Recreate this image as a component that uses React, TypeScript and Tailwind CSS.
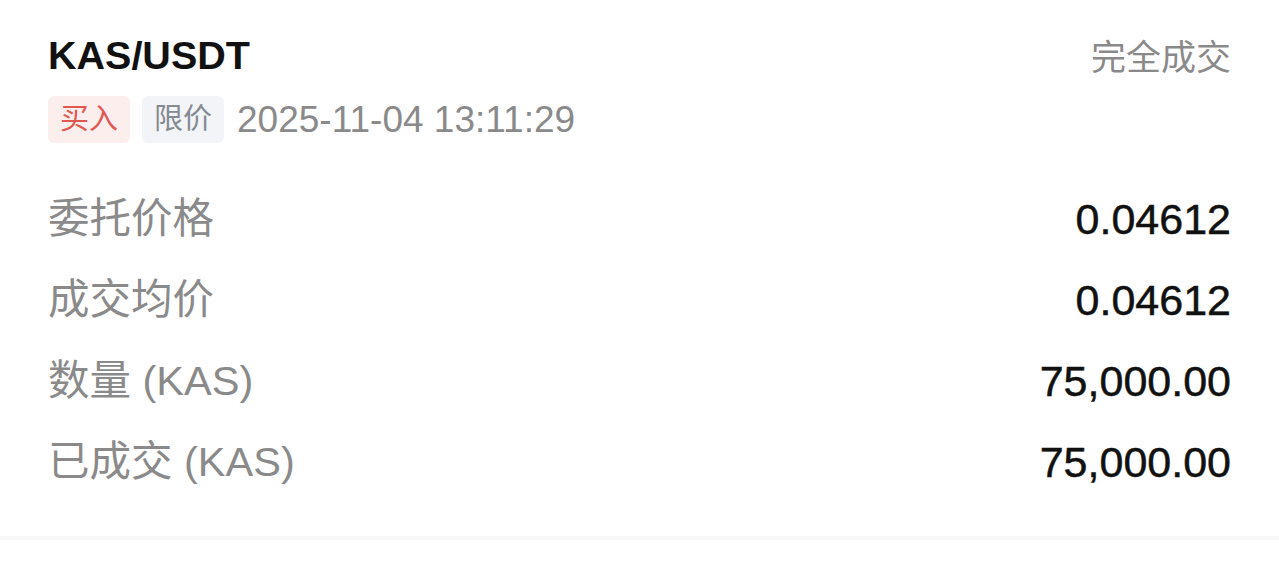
import React from "react";

const rows = [
  { label: "委托价格", value: "0.04612" },
  { label: "成交均价", value: "0.04612" },
  { label: "数量 (KAS)", value: "75,000.00" },
  { label: "已成交 (KAS)", value: "75,000.00" },
];

export default function App() {
  return (
    <div className="w-[1279px] h-[565px] overflow-hidden bg-white font-['Liberation_Sans','Noto_Sans_CJK_SC',sans-serif]">
      {/* ORDER CARD */}
      <div className="px-[48px] pt-[31px]">
        <div className="flex h-[48px] items-center justify-between">
          <h2 className="text-[39.5px] leading-[48px] font-bold text-[#111]">
            KAS/USDT
          </h2>
          <span className="mt-[6px] text-[35px] leading-[40px] text-[#8a8a8a]">
            完全成交
          </span>
        </div>

        <div className="mt-[17px] flex h-[47px] items-center">
          <span className="flex h-[47px] items-center rounded-[6px] bg-[#fdeeee] px-[12px] text-[29px] text-[#e2574f]">
            买入
          </span>
          <span className="ml-[12px] flex h-[47px] items-center rounded-[6px] bg-[#f2f4f7] px-[12px] text-[29px] text-[#858a90]">
            限价
          </span>
          <span className="ml-[13px] text-[37px] leading-[47px] text-[#8a8a8a]">
            2025-11-04 13:11:29
          </span>
        </div>

        <div className="mt-[36px] flex flex-col">
          {rows.map((r) => (
            <div
              key={r.label}
              className="flex h-[81px] items-center justify-between"
            >
              <span className="text-[41.5px] text-[#8a8a8a]">{r.label}</span>
              <span className="text-[43px] text-[#111] [-webkit-text-stroke:0.5px_#111]">
                {r.value}
              </span>
            </div>
          ))}
        </div>
      </div>

      <div className="mt-[33px] h-[4px] bg-[#f7f7f7]" />
    </div>
  );
}
